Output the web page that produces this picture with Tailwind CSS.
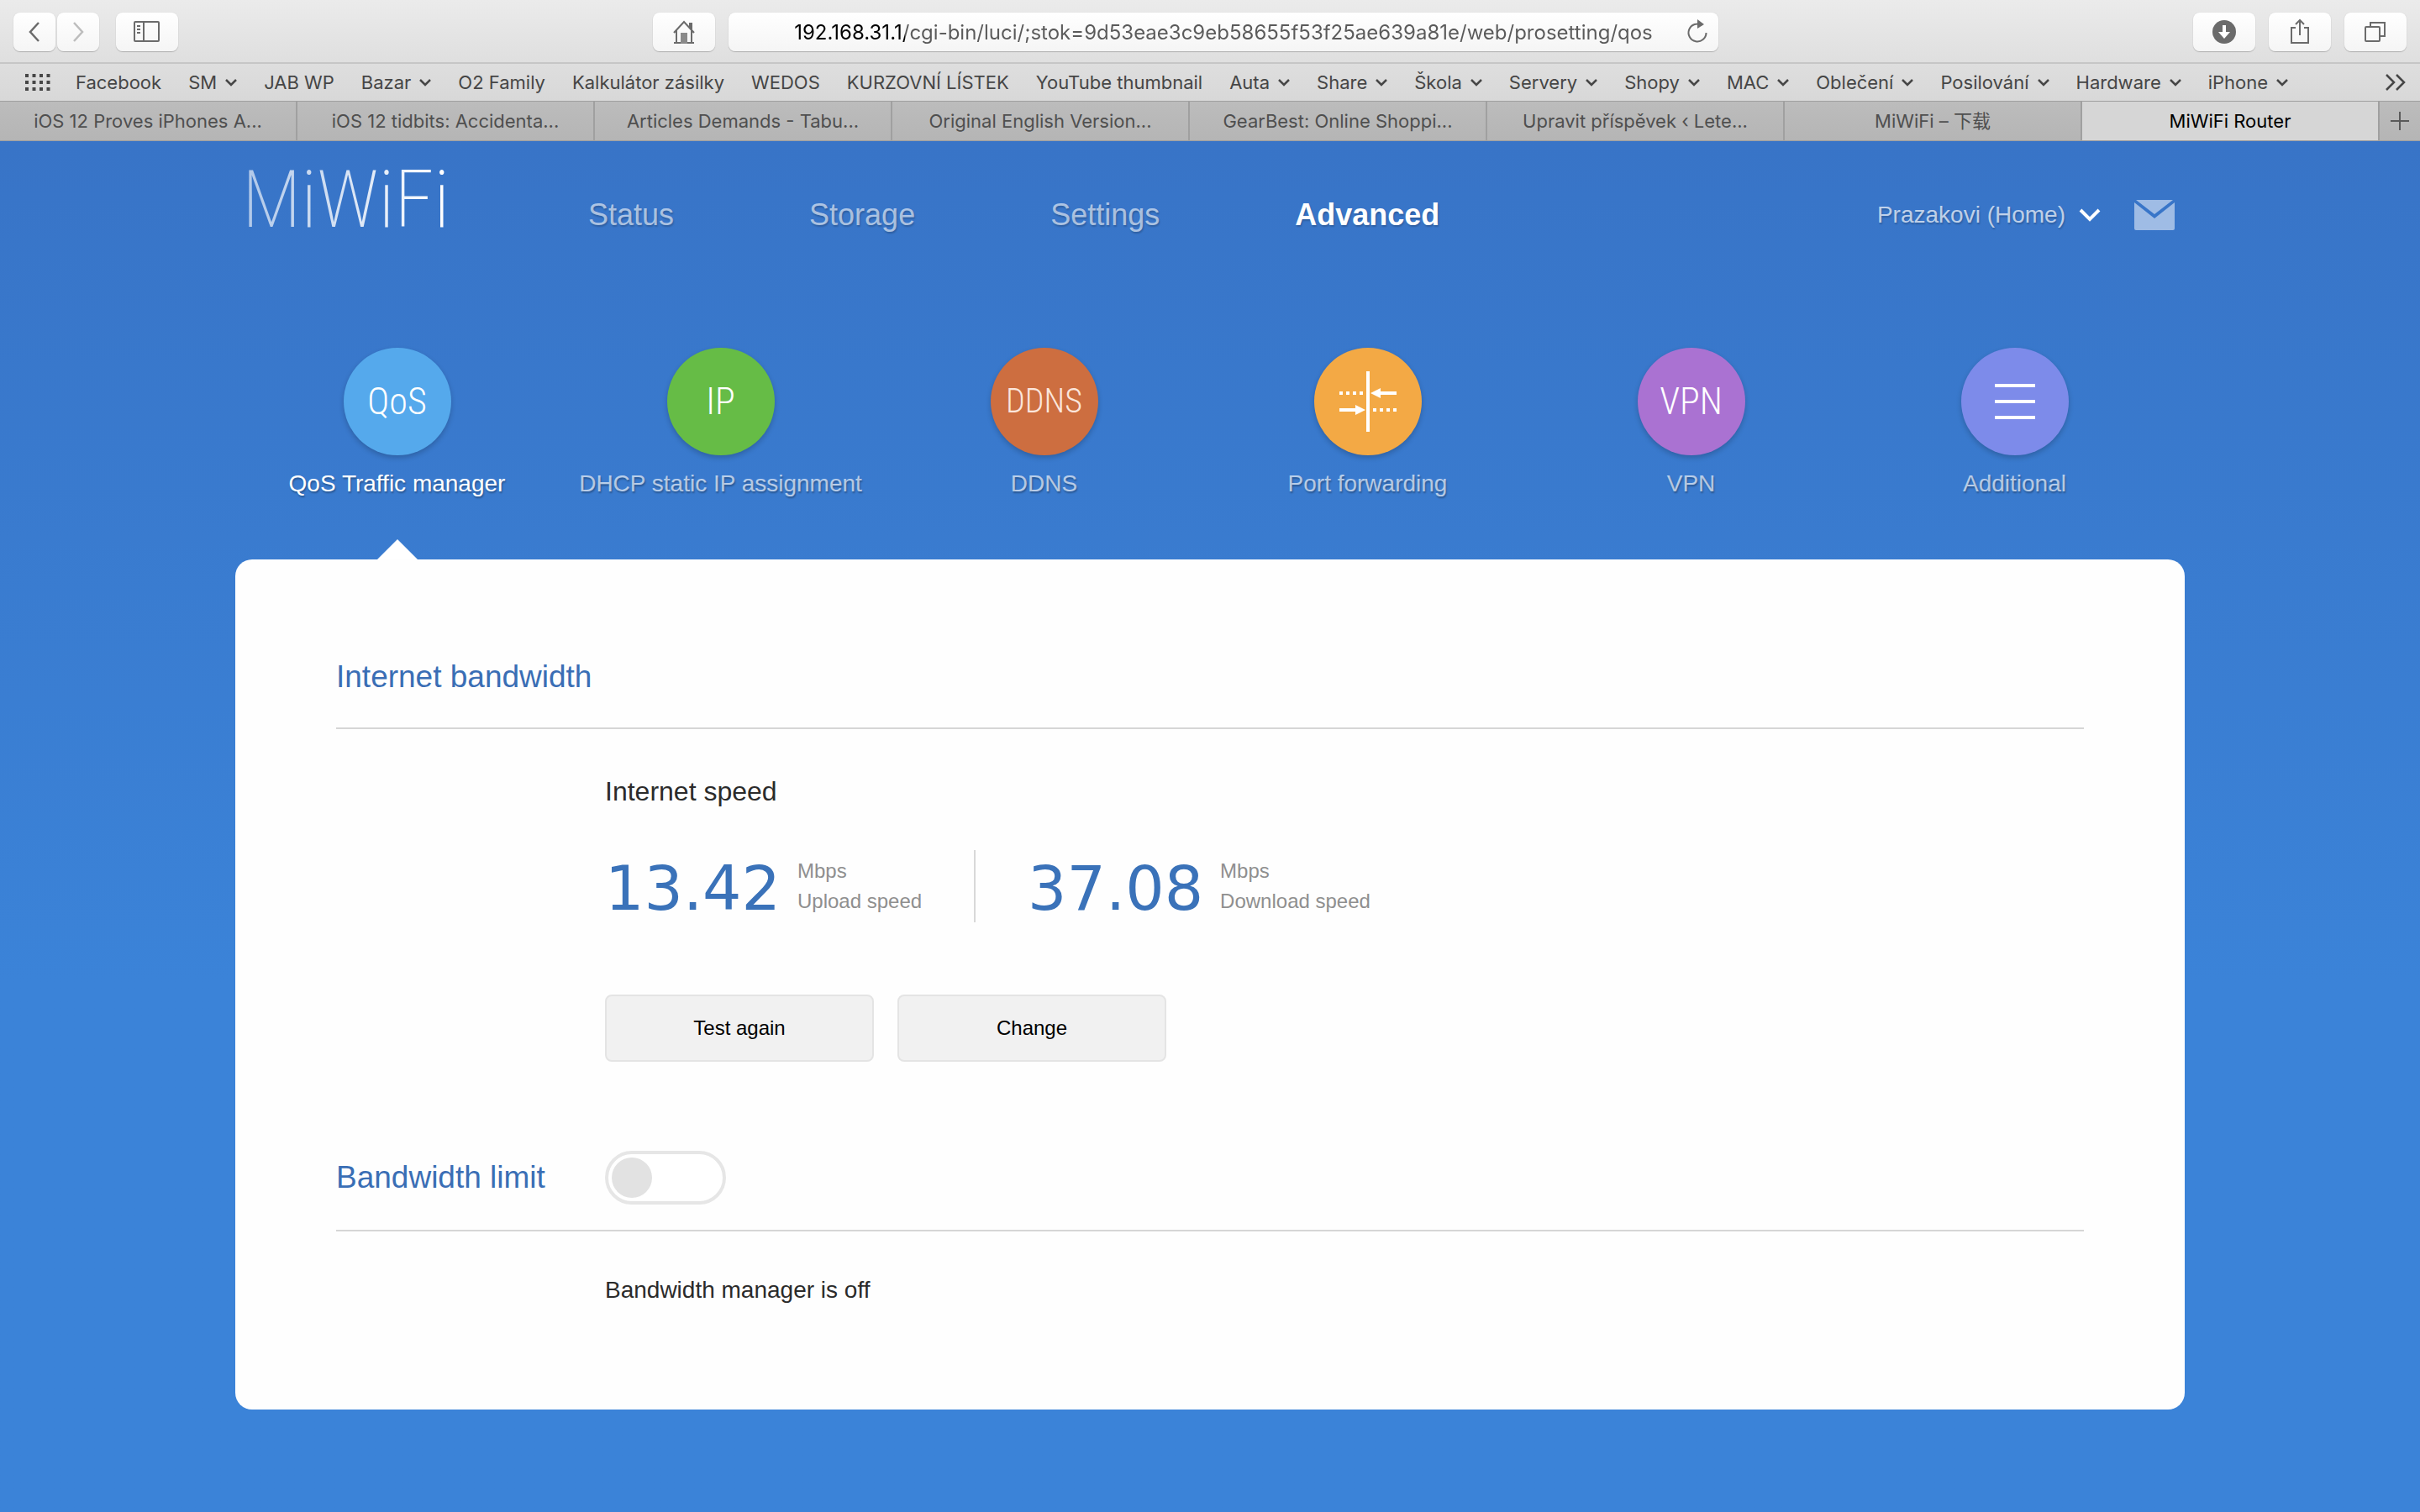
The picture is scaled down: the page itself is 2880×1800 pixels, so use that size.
<!DOCTYPE html>
<html lang="en">
<head>
    <meta charset="UTF-8">
    <meta name="viewport" content="width=device-width, initial-scale=1.0">
    <title>MiWiFi Router</title>
    <script src="https://cdn.jsdelivr.net/npm/@tailwindcss/browser@4"></script>
</head>
<body class="min-h-screen flex flex-col bg-[#3b83d8] font-['Liberation_Sans',Arial,sans-serif]">
    <!-- Browser toolbar -->
    <div class="font-[Inter,'Noto_Sans_CJK_SC',sans-serif] text-[#464646]">
        <div class="flex items-center justify-between h-[76px] px-4 pt-0.5 bg-linear-to-b from-[#ebebeb] to-[#dfdfdf] border-b-2 border-[#c6c6c6]">
            <div class="flex items-center">
                <button aria-label="Back" class="w-[50px] h-[46px] mr-[2px] flex items-center justify-center rounded-lg bg-linear-to-b from-white to-[#f5f5f5] shadow-[0_1px_1px_#b0b0b0,0_0_1px_#c8c8c8]">
                    <svg width="16" height="26" viewBox="0 0 16 26" fill="none" stroke="#6b6b6b" stroke-width="2.5"><path d="M13 2 3 13l10 11"/></svg>
                </button>
                <button aria-label="Forward" class="w-[50px] h-[46px] mr-5 flex items-center justify-center rounded-lg bg-linear-to-b from-white to-[#f5f5f5] shadow-[0_1px_1px_#b0b0b0,0_0_1px_#c8c8c8]">
                    <svg width="16" height="26" viewBox="0 0 16 26" fill="none" stroke="#bdbdbd" stroke-width="2.5"><path d="m3 2 10 11L3 24"/></svg>
                </button>
                <button aria-label="Show sidebar" class="w-[74px] h-[46px] flex items-center justify-center rounded-lg bg-linear-to-b from-white to-[#f5f5f5] shadow-[0_1px_1px_#b0b0b0,0_0_1px_#c8c8c8]">
                    <svg width="32" height="26" viewBox="0 0 32 26" fill="none" stroke="#6b6b6b" stroke-width="2"><rect x="1" y="1" width="29" height="23" rx="1"/><path d="M12 1v23M4 6h4M4 10h4M4 14h4"/></svg>
                </button>
            </div>
            <div class="flex items-center gap-4">
                <button aria-label="Home" class="w-[74px] h-[46px] flex items-center justify-center rounded-lg bg-linear-to-b from-white to-[#f5f5f5] shadow-[0_1px_1px_#b0b0b0,0_0_1px_#c8c8c8]">
                    <svg width="28" height="28" viewBox="0 0 28 28" fill="none" stroke="#6b6b6b" stroke-width="2"><path d="M2 15 14 2l12 13M5 12v14M23 12v14M2 27h24M21 9V4h2v7"/><path d="M11 16h6v11h-6z" fill="#8a8a8a" stroke="#8a8a8a"/></svg>
                </button>
                <div class="relative w-[1178px] h-[46px] rounded-lg bg-linear-to-b from-white to-[#f5f5f5] shadow-[0_1px_1px_#b0b0b0,0_0_1px_#c8c8c8]">
                    <input type="text" aria-label="Address" value="192.168.31.1/cgi-bin/luci/;stok=9d53eae3c9eb58655f53f25ae639a81e/web/prosetting/qos"
                        class="w-full h-full text-center text-2xl text-transparent bg-clip-text bg-linear-to-r from-black from-[210px] to-[#5a5a5a] to-[210px]">
                    <button aria-label="Reload" class="absolute right-3 top-2">
                        <svg width="26" height="30" viewBox="0 0 26 30" fill="none" stroke="#6b6b6b" stroke-width="2"><path d="M18.500 7A10.500 10.500 0 1 0 23.500 16"/><path d="m13 0 8 6-8 5z" fill="#6b6b6b" stroke="none"/></svg>
                    </button>
                </div>
            </div>
            <div class="flex items-center gap-4">
                <button aria-label="Downloads" class="w-[74px] h-[46px] flex items-center justify-center rounded-lg bg-linear-to-b from-white to-[#f5f5f5] shadow-[0_1px_1px_#b0b0b0,0_0_1px_#c8c8c8]">
                    <svg width="28" height="28" viewBox="0 0 28 28"><circle cx="14" cy="14" r="14" fill="#6b6b6b"/><path d="M12 6h4v8h5l-7 8-7-8h5z" fill="#fff"/></svg>
                </button>
                <button aria-label="Share" class="w-[74px] h-[46px] flex items-center justify-center rounded-lg bg-linear-to-b from-white to-[#f5f5f5] shadow-[0_1px_1px_#b0b0b0,0_0_1px_#c8c8c8]">
                    <svg width="26" height="32" viewBox="0 0 26 32" fill="none" stroke="#6b6b6b" stroke-width="2"><path d="M8 11H3v18h20V11h-5M13 20V2M8 7l5-5 5 5"/></svg>
                </button>
                <button aria-label="Show all tabs" class="w-[74px] h-[46px] flex items-center justify-center rounded-lg bg-linear-to-b from-white to-[#f5f5f5] shadow-[0_1px_1px_#b0b0b0,0_0_1px_#c8c8c8]">
                    <svg width="28" height="28" viewBox="0 0 28 28" fill="none" stroke="#6b6b6b" stroke-width="2"><rect x="2" y="8" width="17" height="17" rx="1"/><path d="M8 8V3h17v16h-6"/></svg>
                </button>
            </div>
        </div>

        <!-- Bookmarks -->
        <div class="flex items-center h-11 pl-[30px] pr-4 bg-linear-to-b from-[#dedede] to-[#d8d8d8] text-[22px]">
            <svg class="mr-[30px] shrink-0" width="30" height="22" viewBox="0 0 30 22" fill="none" stroke="#464646" stroke-width="4" stroke-dasharray="4 4.500"><path d="M0 3h30M0 11h30M0 19h30"/></svg>
            <nav id="bookmarks" class="flex items-center gap-8 whitespace-nowrap"></nav>
            <button aria-label="More bookmarks" class="ml-auto">
                <svg width="26" height="20" viewBox="0 0 26 20" fill="none" stroke="#464646" stroke-width="2.500"><path d="m2 1 9 9-9 9M14 1l9 9-9 9"/></svg>
            </button>
        </div>

        <!-- Tabs -->
        <div class="flex h-12 border-y border-[#a0a0a0] bg-linear-to-b from-[#bcbcbc] to-[#b5b5b5] text-[22px]">
            <div id="tabs" class="flex grow"></div>
            <button aria-label="New tab" class="w-12 flex items-center justify-center">
                <svg width="22" height="22" viewBox="0 0 22 22" stroke="#5a5a5a" stroke-width="2"><path d="M11 0v22M0 11h22"/></svg>
            </button>
        </div>
    </div>

    <!-- Router page -->
    <div class="grow bg-linear-to-b from-[#3874c7] to-[#3b83d8] to-[1000px] px-10 pb-[122px]">
        <div class="max-w-[2320px] mx-auto">
            <header class="flex items-center h-44 pl-2 pr-3">
                <a href="#" class="w-[412px] pb-9 font-['Roboto_Condensed',Roboto,sans-serif] font-extralight text-[94px] leading-[92px] text-transparent bg-clip-text bg-linear-to-r from-white/60 to-white to-[240px]">MiWiFi</a>
                <nav class="flex gap-[161px] text-4xl text-white/60 [text-shadow:1px_2px_2px_rgba(0,0,0,0.2)]">
                    <a href="#">Status</a>
                    <a href="#">Storage</a>
                    <a href="#">Settings</a>
                    <a href="#" class="font-bold text-white">Advanced</a>
                </nav>
                <button class="ml-auto flex items-center gap-4 text-[28px] text-white/70 [text-shadow:1px_2px_2px_rgba(0,0,0,0.2)]">
                    Prazakovi (Home)
                    <svg width="26" height="18" viewBox="0 0 26 18" fill="none" stroke="#fff" stroke-width="4"><path d="m2 3 11 11L24 3"/></svg>
                </button>
                <a href="#" aria-label="Messages" class="ml-10">
                    <svg width="48" height="36" viewBox="0 0 48 36" fill="#9fbce5"><path d="M2 0h44L24 17z"/><path d="M0 3l24 19L48 3v31a2 2 0 0 1-2 2H2a2 2 0 0 1-2-2z"/></svg>
                </a>
            </header>

            <nav class="grid grid-cols-6 pt-[70px] pr-2.5 h-[322px] text-[28px] leading-9 text-white/65 text-center [text-shadow:1px_2px_2px_rgba(0,0,0,0.3)]">
                <a href="#" class="relative flex flex-col items-center gap-4 text-white">
                    <span class="size-32 rounded-full flex items-center justify-center bg-[#55a9ec] shadow-[0_3px_6px_rgba(0,0,0,0.2)] font-['Roboto_Condensed',Roboto,sans-serif] font-light text-[44px] [text-shadow:none]">QoS</span>
                    QoS Traffic manager
                    <svg class="absolute bottom-0" width="48" height="24" viewBox="0 0 48 24" fill="#fff"><path d="M24 0l24 24H0z"/></svg>
                </a>
                <a href="#" class="flex flex-col items-center gap-4">
                    <span class="size-32 rounded-full flex items-center justify-center bg-[#66bc46] shadow-[0_3px_6px_rgba(0,0,0,0.2)] font-['Roboto_Condensed',Roboto,sans-serif] font-light text-[44px] text-white [text-shadow:none]">IP</span>
                    DHCP static IP assignment
                </a>
                <a href="#" class="flex flex-col items-center gap-4">
                    <span class="size-32 rounded-full flex items-center justify-center bg-[#cd6e40] shadow-[0_3px_6px_rgba(0,0,0,0.2)] font-['Roboto_Condensed',Roboto,sans-serif] font-light text-[40px] text-[#fbe6dc] [text-shadow:none]">DDNS</span>
                    DDNS
                </a>
                <a href="#" class="flex flex-col items-center gap-4">
                    <span class="size-32 rounded-full flex items-center justify-center bg-[#f3a945] shadow-[0_3px_6px_rgba(0,0,0,0.2)]">
                        <svg width="72" height="72" viewBox="0 0 72 72" fill="#fff"><path d="M34 0h4v72h-4zM39 26l12-6v4h19v4H51v4zM33 46l-12-6v4H2v4h19v4z"/><path d="M2 24h4v4H2zM10 24h4v4h-4zM18 24h4v4h-4zM26 24h4v4h-4zM42 44h4v4h-4zM50 44h4v4h-4zM58 44h4v4h-4zM66 44h4v4h-4z"/></svg>
                    </span>
                    Port forwarding
                </a>
                <a href="#" class="flex flex-col items-center gap-4">
                    <span class="size-32 rounded-full flex items-center justify-center bg-[#aa72d2] shadow-[0_3px_6px_rgba(0,0,0,0.2)] font-['Roboto_Condensed',Roboto,sans-serif] font-light text-[44px] text-white [text-shadow:none]">VPN</span>
                    VPN
                </a>
                <a href="#" class="flex flex-col items-center gap-4">
                    <span class="size-32 rounded-full flex items-center justify-center bg-[#7d8bea] shadow-[0_3px_6px_rgba(0,0,0,0.2)]">
                        <svg width="48" height="42" viewBox="0 0 48 42" fill="#fff"><path d="M0 0h48v4H0zM0 19h48v4H0zM0 38h48v4H0z"/></svg>
                    </span>
                    Additional
                </a>
            </nav>

            <main class="rounded-[20px] bg-[#fefefe] px-[120px] pt-[114px] pb-[122px] text-[#2b2b2b]">
                <section>
                    <h2 class="pb-[34px] border-b-2 border-[#d6d6d6] text-[37px] leading-[52px] text-[#3a6eb5]">Internet bandwidth</h2>
                    <div class="pl-80 pt-[54px]">
                        <h3 class="text-[32px] leading-10">Internet speed</h3>
                        <div class="flex items-center pt-[50px]">
                            <span class="pt-1.5 font-['DejaVu_Sans',Verdana,sans-serif] text-[73px] leading-[72px] text-[#3a72b9]">13.42</span>
                            <p class="pl-5 pr-[62px] text-2xl leading-9 text-[#8f8f8f]">Mbps<br>Upload speed</p>
                            <span class="h-[86px] border-l-2 border-[#d8d8d8]"></span>
                            <span class="pl-[62px] pt-1.5 font-['DejaVu_Sans',Verdana,sans-serif] text-[73px] leading-[72px] text-[#3a72b9]">37.08</span>
                            <p class="pl-5 text-2xl leading-9 text-[#8f8f8f]">Mbps<br>Download speed</p>
                        </div>
                        <div class="flex gap-7 pt-[86px]">
                            <button class="w-80 h-20 rounded-lg border-2 border-[#e4e4e4] bg-[#f1f1f1] text-2xl text-black">Test again</button>
                            <button class="w-80 h-20 rounded-lg border-2 border-[#e4e4e4] bg-[#f1f1f1] text-2xl text-black">Change</button>
                        </div>
                    </div>
                </section>

                <section class="pt-[106px]">
                    <div class="flex items-center pb-[30px] border-b-2 border-[#d6d6d6]">
                        <h2 class="w-80 text-[37px] leading-[52px] text-[#3a6eb5]"><label for="bandwidthLimit">Bandwidth limit</label></h2>
                        <input type="checkbox" id="bandwidthLimit" class="appearance-none flex items-center w-36 h-16 px-1 rounded-full border-4 border-[#e6e6e6] bg-white before:size-12 before:rounded-full before:bg-[#e2e2e2] checked:justify-end">
                    </div>
                    <p class="pl-80 pt-[50px] text-[28px] leading-10">Bandwidth manager is off</p>
                </section>
            </main>
        </div>
    </div>

    <script>
        // name, has submenu
        const bookmarks = [
            ['Facebook'], ['SM', true], ['JAB WP'], ['Bazar', true], ['O2 Family'], ['Kalkulátor zásilky'],
            ['WEDOS'], ['KURZOVNÍ LÍSTEK'], ['YouTube thumbnail'], ['Auta', true], ['Share', true],
            ['Škola', true], ['Servery', true], ['Shopy', true], ['MAC', true], ['Oblečení', true],
            ['Posilování', true], ['Hardware', true], ['iPhone', true]
        ];

        const tabs = [
            'iOS 12 Proves iPhones A...', 'iOS 12 tidbits: Accidenta...', 'Articles Demands - Tabu...',
            'Original English Version...', 'GearBest: Online Shoppi...', 'Upravit příspěvek ‹ Lete...',
            'MiWiFi – 下载', 'MiWiFi Router'
        ];

        const chevron = '<svg width="14" height="10" viewBox="0 0 14 10" fill="none" stroke="#464646" stroke-width="2.5"><path d="m1 2 6 6 6-6"/></svg>';

        document.getElementById('bookmarks').innerHTML = bookmarks.map(([name, menu]) =>
            menu ? `<button class="flex items-center gap-2.5">${name}${chevron}</button>` : `<a href="#">${name}</a>`
        ).join('');

        document.getElementById('tabs').innerHTML = tabs.map((name, i) => {
            const active = i === tabs.length - 1;
            return `<a href="#" class="flex-1 flex items-center justify-center border-r-2 border-[#a0a0a0] ${active ? 'bg-[#d6d6d6] text-black' : 'text-[#4f4f4f]'}">${name}</a>`;
        }).join('');
    </script>
</body>
</html>
